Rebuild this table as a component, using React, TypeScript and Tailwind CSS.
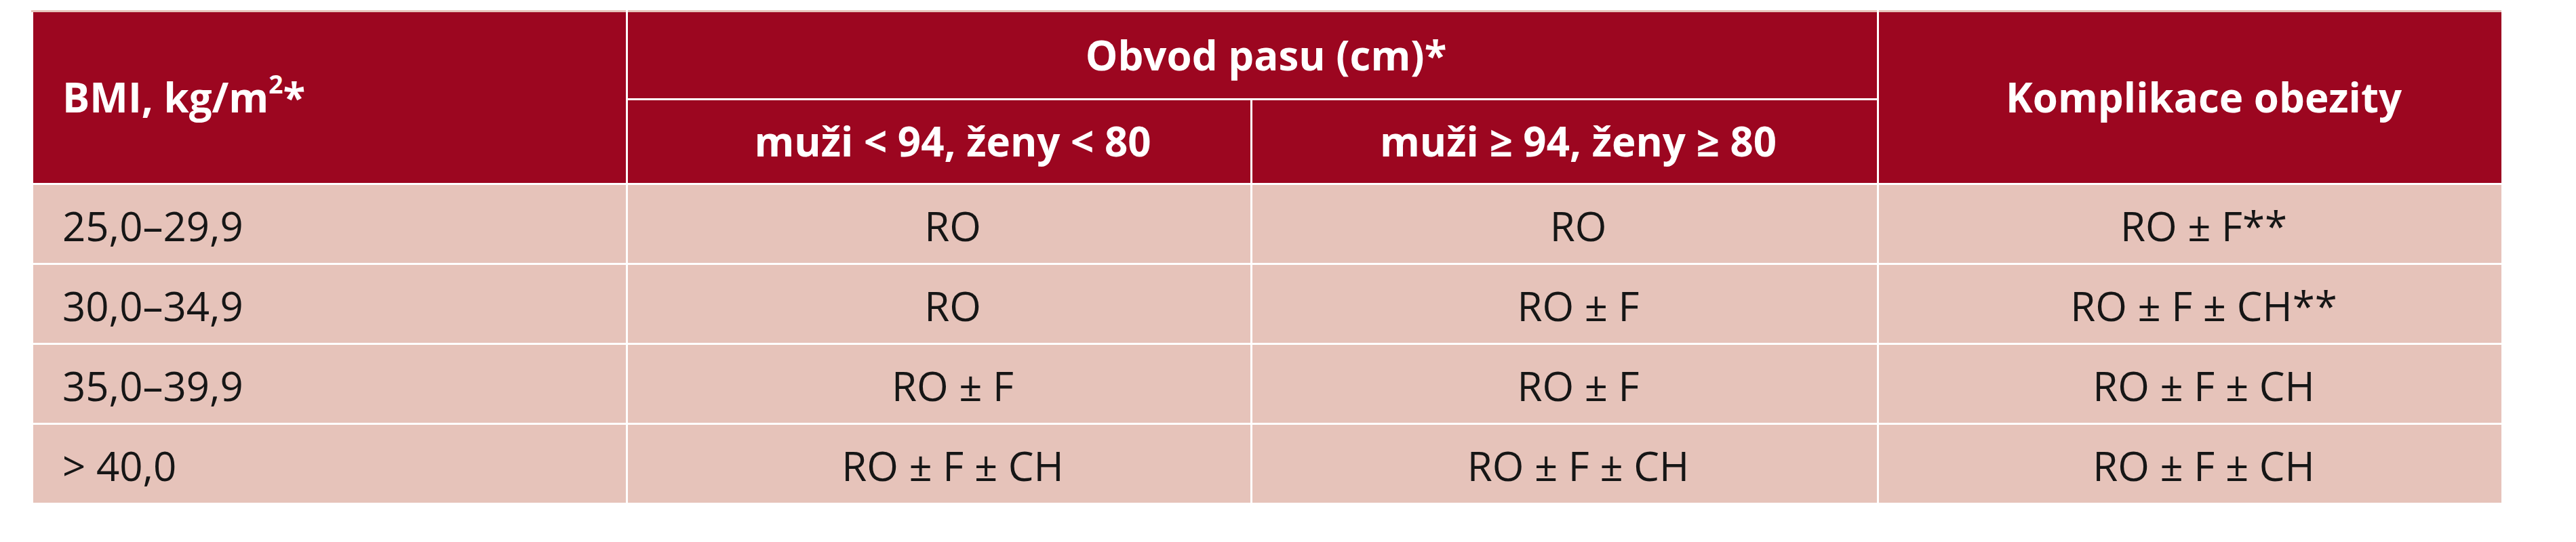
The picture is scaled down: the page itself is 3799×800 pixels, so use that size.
const rows = [
  { bmi: "25,0–29,9", low: "RO", high: "RO", compl: "RO ± F**" },
  { bmi: "30,0–34,9", low: "RO", high: "RO ± F", compl: "RO ± F ± CH**" },
  { bmi: "35,0–39,9", low: "RO ± F", high: "RO ± F", compl: "RO ± F ± CH" },
  { bmi: "> 40,0", low: "RO ± F ± CH", high: "RO ± F ± CH", compl: "RO ± F ± CH" },
];

const head = "bg-[#9c0620] text-white font-bold border-[3px] border-white";
const cell = "bg-[#e6c3ba] text-[#161616] border-[3px] border-white";

export default function App() {
  return (
    <div className="min-h-[800px] w-[3799px] bg-white pl-[46px] pt-[15px] font-['Open_Sans','Noto_Sans',sans-serif]">
      <table className="w-[3643px] table-fixed border-collapse text-[60px] leading-[1.36]">
        <colgroup>
          <col className="w-[877px]" />
          <col className="w-[921px]" />
          <col className="w-[924px]" />
          <col className="w-[921px]" />
        </colgroup>
        <thead>
          <tr className="h-[130px]">
            <th rowSpan={2} className={`${head} border-t-[#e6c3ba] border-l-white pl-[43px] text-left`}>
              BMI, kg/m<sup className="text-[0.62em] -top-[0.75em]">2</sup>*
            </th>
            <th colSpan={2} className={`${head} border-t-[#e6c3ba] pl-[48px] pr-[8px] text-center`}>
              Obvod pasu (cm)*
            </th>
            <th rowSpan={2} className={`${head} border-t-[#e6c3ba] pl-[48px] pr-[8px] text-center`}>
              Komplikace obezity
            </th>
          </tr>
          <tr className="h-[125px]">
            <th className={`${head} pl-[48px] pr-[8px] text-center`}>muži &lt; 94, ženy &lt; 80</th>
            <th className={`${head} pl-[48px] pr-[8px] text-center`}>muži ≥ 94, ženy ≥ 80</th>
          </tr>
        </thead>
        <tbody>
          {rows.map((r) => (
            <tr key={r.bmi} className="h-[118px]">
              <td className={`${cell} pl-[43px] pt-[6px] text-left`}>{r.bmi}</td>
              <td className={`${cell} pl-[48px] pr-[8px] pt-[6px] text-center`}>{r.low}</td>
              <td className={`${cell} pl-[48px] pr-[8px] pt-[6px] text-center`}>{r.high}</td>
              <td className={`${cell} pl-[48px] pr-[8px] pt-[6px] text-center`}>{r.compl}</td>
            </tr>
          ))}
        </tbody>
      </table>
    </div>
  );
}
